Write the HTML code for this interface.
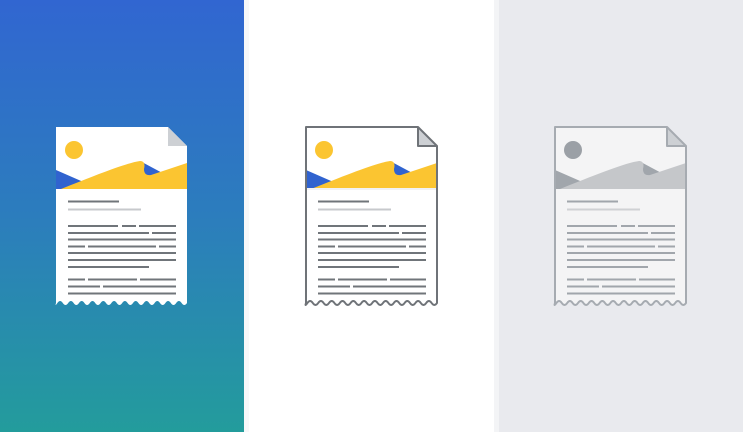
<!DOCTYPE html>
<html><head><style>
html,body{margin:0;padding:0}
body{width:743px;height:432px;position:relative;overflow:hidden;background:#fff;font-family:"Liberation Sans",sans-serif}
.p1{position:absolute;left:0;top:0;width:244px;height:432px;background:linear-gradient(#3166d1,#2c7dbd 50%,#239c9c)}
.s1{position:absolute;left:244px;top:0;width:5px;height:432px;background:#f7f8f9}
.s2{position:absolute;left:494px;top:0;width:5px;height:432px;background:#f3f4f6}
.p3{position:absolute;left:499px;top:0;width:244px;height:432px;background:#e9eaee}
svg{position:absolute;top:125px;overflow:visible}
</style></head><body>
<div class="p1"></div><div class="s1"></div><div class="s2"></div><div class="p3"></div>

<svg width="135" height="185" viewBox="-2 -2 135 185" style="left:54px">
<defs>
<clipPath id="c1"><rect x="0" y="0" width="131" height="62"/></clipPath>
</defs>
<path d="M0,0H112L131,19V176q-2.7,4 -5.4,0t-5.4,0t-5.4,0t-5.4,0t-5.4,0t-5.4,0t-5.4,0t-5.4,0t-5.4,0t-5.4,0t-5.4,0t-5.4,0t-5.4,0t-5.4,0t-5.4,0t-5.4,0t-5.4,0t-5.4,0t-5.4,0t-5.4,0t-5.4,0t-5.4,0t-5.4,0t-5.4,0t-1.4,0Z" fill="#fff"/>
<g clip-path="url(#c1)">
<path d="M0,43L32,57L20,62H0Z" fill="#3063cf"/>
<path d="M84,34L112,49L90,50Z" fill="#3063cf"/>
<path d="M5,62C40,48 70,36 84,34Q90,34 88,42Q88,49 95,48L131,36V62Z" fill="#fbc531"/>
<circle cx="18" cy="23" r="9" fill="#fbc531"/>
</g>
<path d="M112,0V19H131Z" fill="#cdd0d4"/>
<g stroke="#70757a" stroke-width="2">
<path d="M12,74.5H63"/>
<path d="M12,99H62M66,99H80M83,99H120M12,106H93M96,106H120M12,112.5H120M12,119.5H29M32,119.5H100M103,119.5H120M12,126H120M12,133H120M12,140H93M12,152.5H29M32,152.5H81M84,152.5H120M12,159.5H44M47,159.5H120M12,166.5H120"/>
</g>
<path d="M12,82.5H85" stroke="#c7c9cc" stroke-width="2"/>
</svg>

<svg width="135" height="185" viewBox="-2 -2 135 185" style="left:304px">
<defs><clipPath id="c2"><rect x="0" y="0" width="131" height="62"/></clipPath></defs>
<path d="M0,0H112L131,19V176q-2.7,4 -5.4,0t-5.4,0t-5.4,0t-5.4,0t-5.4,0t-5.4,0t-5.4,0t-5.4,0t-5.4,0t-5.4,0t-5.4,0t-5.4,0t-5.4,0t-5.4,0t-5.4,0t-5.4,0t-5.4,0t-5.4,0t-5.4,0t-5.4,0t-5.4,0t-5.4,0t-5.4,0t-5.4,0t-1.4,0Z" fill="#fff"/>
<g clip-path="url(#c2)">
<path d="M0,43L32,57L20,62H0Z" fill="#3063cf"/>
<path d="M84,34L112,49L90,50Z" fill="#3063cf"/>
<path d="M5,62C40,48 70,36 84,34Q90,34 88,42Q88,49 95,48L131,36V62Z" fill="#fbc531"/>
<circle cx="18" cy="23" r="9" fill="#fbc531"/>
</g>
<path d="M0,62H131" stroke="#f1f2f4" stroke-width="2"/>
<path d="M112,0V19H131Z" fill="#cdd0d4"/>
<path d="M0,0H112L131,19V176q-2.7,4 -5.4,0t-5.4,0t-5.4,0t-5.4,0t-5.4,0t-5.4,0t-5.4,0t-5.4,0t-5.4,0t-5.4,0t-5.4,0t-5.4,0t-5.4,0t-5.4,0t-5.4,0t-5.4,0t-5.4,0t-5.4,0t-5.4,0t-5.4,0t-5.4,0t-5.4,0t-5.4,0t-5.4,0t-1.4,0ZM112,0V19H131" fill="none" stroke="#6f7378" stroke-width="2" stroke-linejoin="round"/>
<g stroke="#70757a" stroke-width="2">
<path d="M12,74.5H63"/>
<path d="M12,99H62M66,99H80M83,99H120M12,106H93M96,106H120M12,112.5H120M12,119.5H29M32,119.5H100M103,119.5H120M12,126H120M12,133H120M12,140H93M12,152.5H29M32,152.5H81M84,152.5H120M12,159.5H44M47,159.5H120M12,166.5H120"/>
</g>
<path d="M12,82.5H85" stroke="#c7c9cc" stroke-width="2"/>
</svg>

<svg width="135" height="185" viewBox="-2 -2 135 185" style="left:553px">
<defs><clipPath id="c3"><rect x="0" y="0" width="131" height="62"/></clipPath></defs>
<path d="M0,0H112L131,19V176q-2.7,4 -5.4,0t-5.4,0t-5.4,0t-5.4,0t-5.4,0t-5.4,0t-5.4,0t-5.4,0t-5.4,0t-5.4,0t-5.4,0t-5.4,0t-5.4,0t-5.4,0t-5.4,0t-5.4,0t-5.4,0t-5.4,0t-5.4,0t-5.4,0t-5.4,0t-5.4,0t-5.4,0t-5.4,0t-1.4,0Z" fill="#f4f4f5"/>
<g clip-path="url(#c3)">
<path d="M0,43L32,57L20,62H0Z" fill="#a1a6ac"/>
<path d="M84,34L112,49L90,50Z" fill="#a1a6ac"/>
<path d="M5,62C40,48 70,36 84,34Q90,34 88,42Q88,49 95,48L131,36V62Z" fill="#c5c7ca"/>
<circle cx="18" cy="23" r="9" fill="#9ba0a6"/>
</g>
<path d="M112,0V19H131Z" fill="#cdd0d4"/>
<path d="M0,0H112L131,19V176q-2.7,4 -5.4,0t-5.4,0t-5.4,0t-5.4,0t-5.4,0t-5.4,0t-5.4,0t-5.4,0t-5.4,0t-5.4,0t-5.4,0t-5.4,0t-5.4,0t-5.4,0t-5.4,0t-5.4,0t-5.4,0t-5.4,0t-5.4,0t-5.4,0t-5.4,0t-5.4,0t-5.4,0t-5.4,0t-1.4,0ZM112,0V19H131" fill="none" stroke="#a6abb1" stroke-width="2" stroke-linejoin="round"/>
<g stroke="#a1a6ac" stroke-width="2">
<path d="M12,74.5H63"/>
<path d="M12,99H62M66,99H80M83,99H120M12,106H93M96,106H120M12,112.5H120M12,119.5H29M32,119.5H100M103,119.5H120M12,126H120M12,133H120M12,140H93M12,152.5H29M32,152.5H81M84,152.5H120M12,159.5H44M47,159.5H120M12,166.5H120"/>
</g>
<path d="M12,82.5H85" stroke="#cfd1d4" stroke-width="2"/>
</svg>
</body></html>
